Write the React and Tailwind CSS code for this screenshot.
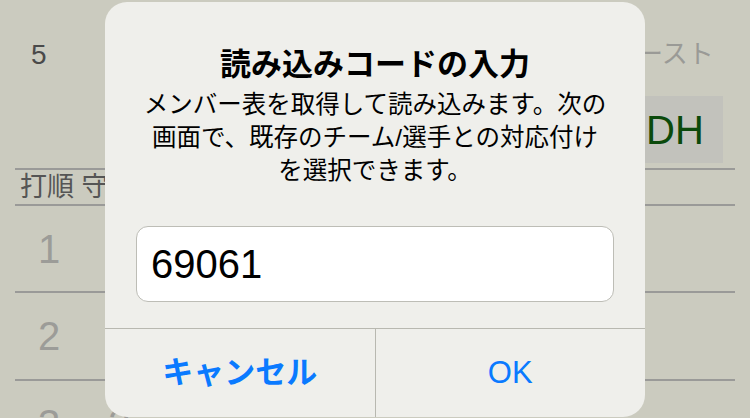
import React from "react";

const font = { fontFamily: '"Liberation Sans", "Noto Sans CJK JP", sans-serif' };

export default function App() {
  return (
    <div
      className="relative w-[750px] h-[418px] overflow-hidden bg-[#cbcbbf]"
      style={font}
    >
      {/* background screen */}
      <div className="flex flex-col">
        <div className="h-[168px] flex justify-between">
          <div className="ml-[31px] mt-[35px] text-[28px] leading-[40px] text-[#4a4a4a]">5</div>
          <div className="w-[105px] flex flex-col items-start">
            <div className="-ml-[8px] mt-[36px] text-[26px] leading-[36px] text-[#9a9a96] whitespace-nowrap">ースト</div>
            <div className="mt-[24px] w-[78px] h-[67px] bg-[#c2c2bc] flex items-center pl-[1px] text-[40px] text-[#0b4a0b]">DH</div>
          </div>
        </div>
        <div className="mx-[15px] border-t-2 border-[#9a9a98] h-[36px] flex items-center pl-[5px] text-[27px] leading-[34px] text-[#555] whitespace-nowrap">
          打順 守備
        </div>
        <div className="mx-[15px] border-t-2 border-[#9a9a98] h-[87px] flex items-center pl-[23px] text-[40px] text-[#9c9c98]">1</div>
        <div className="mx-[15px] border-t-2 border-[#9a9a98] h-[88px] flex items-center pl-[23px] text-[40px] text-[#9c9c98]">2</div>
        <div className="mx-[15px] border-t-2 border-[#9a9a98] h-[88px] flex items-center pl-[23px] gap-[48px] text-[40px] text-[#9c9c98]">
          <span>3</span>
          <span>3</span>
        </div>
      </div>

      {/* alert dialog */}
      <div className="absolute left-[105px] top-[2px] w-[540px] h-[415px] rounded-[22px] bg-[#efefeb] flex flex-col">
        <div className="pt-[43px] text-center text-[31px] font-bold leading-[40px] text-black">
          読み込みコードの入力
        </div>
        <div className="mt-[3px] text-center text-[24.5px] leading-[33px] text-black">
          メンバー表を取得して読み込みます。次の
          <br />
          画面で、既存のチーム/選手との対応付け
          <br />
          を選択できます。
        </div>
        <div className="mt-[39px] mx-[31px] h-[76px] rounded-[12px] border border-[#bdbdb6] bg-white flex items-center pl-[14px] text-[40px] text-black">
          69061
        </div>
        <div className="mt-[26px] flex-1 border-t border-[#b8b8b0] flex">
          <div className="flex-1 flex items-center justify-center text-[31px] font-bold text-[#0a7aff] border-r border-[#b8b8b0]">
            キャンセル
          </div>
          <div className="flex-1 flex items-center justify-center text-[31px] text-[#0a7aff]">
            OK
          </div>
        </div>
      </div>
    </div>
  );
}
